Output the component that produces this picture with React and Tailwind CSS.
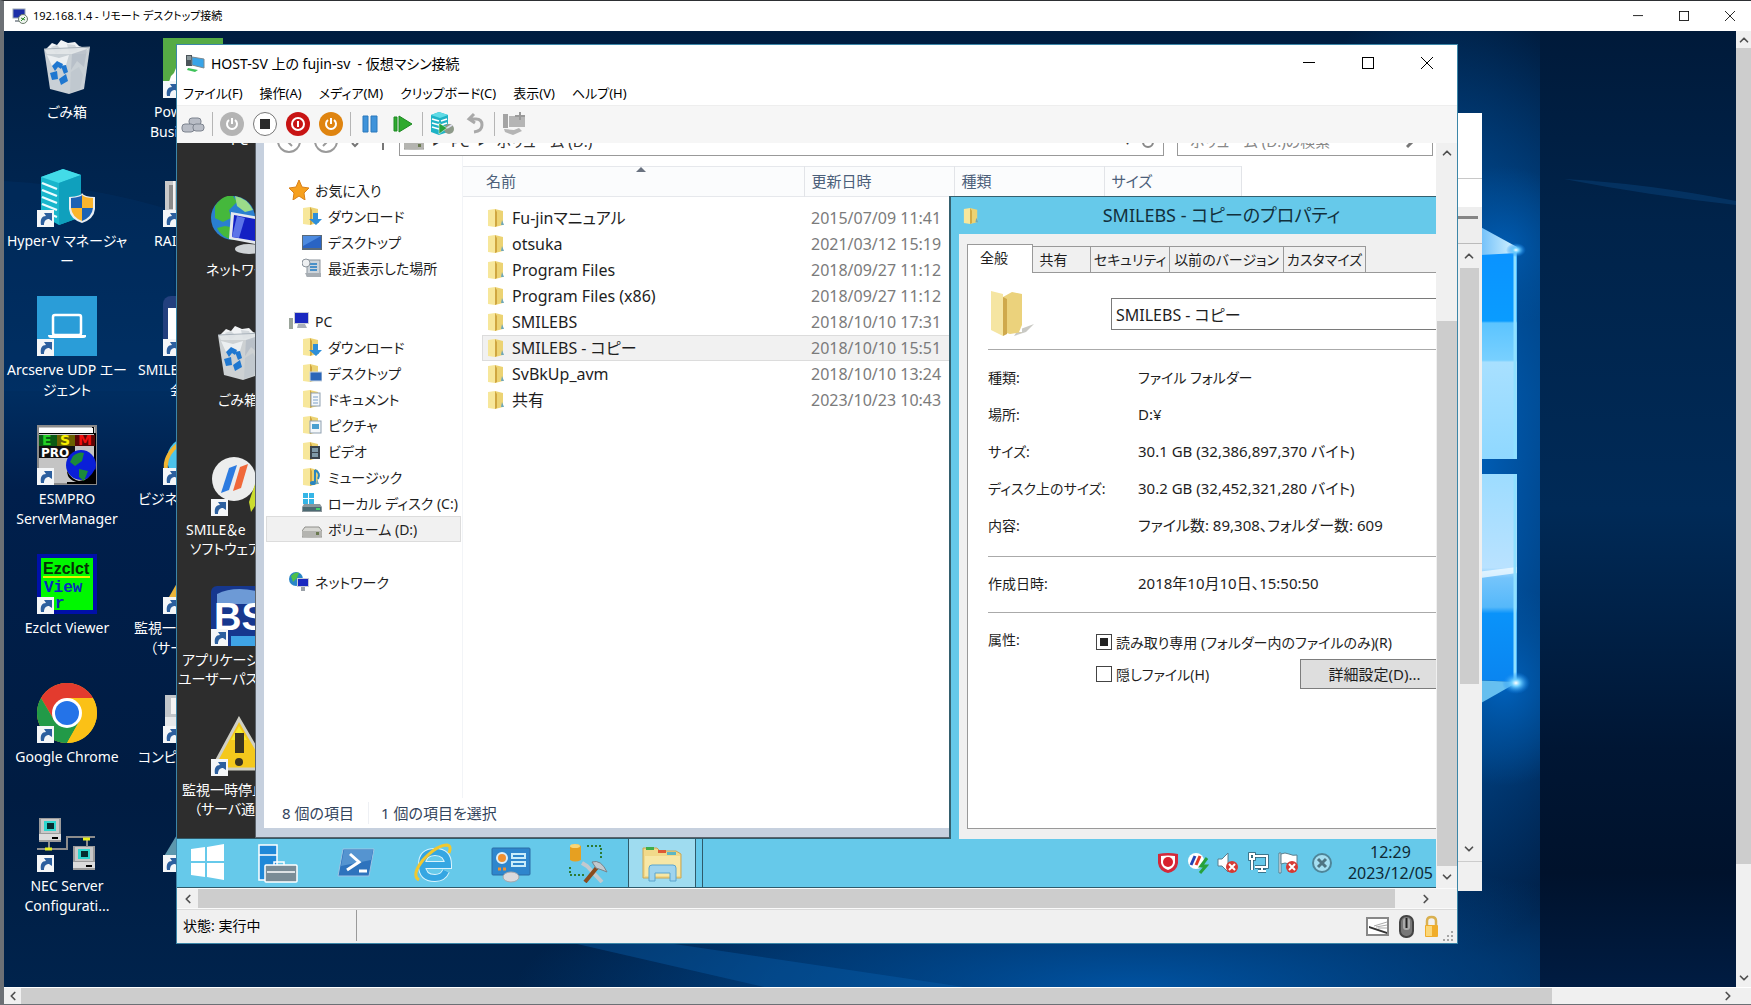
import React from "react";
import { ChevronUp, ChevronDown, ChevronLeft, ChevronRight } from "lucide-react";

/* ---------- small shared pieces ---------- */

const ScrollButton = ({ dir, className }) => {
  const icons = { up: ChevronUp, down: ChevronDown, left: ChevronLeft, right: ChevronRight };
  const Icon = icons[dir];
  return (
    <button aria-label={`scroll ${dir}`} className={`flex shrink-0 items-center justify-center bg-[#f0f0f0] text-[#505050] ${className}`}>
      <Icon size={14} strokeWidth={3} />
    </button>
  );
};

const WindowButtons = ({ className, size }) => (
  <div className={`flex items-center ${className}`}>
    <button aria-label="minimize">
      <svg width={size} height={size} viewBox="0 0 12 12"><path d="M0 5.5h12" stroke="#000" /></svg>
    </button>
    <button aria-label="maximize">
      <svg width={size} height={size} viewBox="0 0 12 12"><rect x=".5" y=".5" width="11" height="11" fill="none" stroke="#000" /></svg>
    </button>
    <button aria-label="close">
      <svg width={size} height={size} viewBox="0 0 12 12"><path d="M0 0l12 12M12 0L0 12" stroke="#000" /></svg>
    </button>
  </div>
);

const ShortcutArrow = () => (
  <g>
    <rect x="0" y="43" width="17" height="17" fill="#f4f6f8" />
    <path d="M4 58c-1-6 1-9 5-9l-2-3h8v8l-3-2c-3 0-5 2-5 6z" fill="#2c5f9e" />
  </g>
);

/* ---------- desktop icons (60 x 60) ---------- */

const Bin = () => (
  <g>
    <path d="M8 12l7-7 5 2 4-5 7 3 7-1 4 4 9 3-3 5H10z" fill="#f1f3f5" />
    <path d="M14 9l6-2 5 5-6 4zM30 6l8 1 3 6-9 2z" fill="#d3d8dc" />
    <path d="M7 11l46-2-6 42-15 5-19-5z" fill="#dfe3e6" opacity=".9" />
    <path d="M35 16l15-5-3 18-7-6-6 9z" fill="#b4bcc6" opacity=".8" />
    <path d="M34 34l8-5 4 8-3 14-10 4z" fill="#bcc4cc" opacity=".7" />
    <path d="M10 17l12 3 10-3-3 10-14 1z" fill="#eceff1" />
    <path d="M7 11l46-2" stroke="#a9b2ba" />
    <path d="M15 28l5-5 6 3-2 5-3-2-3 4zM13 35l7-2 1 8-6 1zM22 41l7-5 2 7-7 4zM24 28l5-1 2 7-4 2z" fill="#1f77d0" />
  </g>
);

const ServerTower = () => (
  <g>
    <path d="M4 10l22-8 18 6v42l-22 8L4 48z" fill="#19b6cc" />
    <path d="M4 10l22-8 18 6-22 8z" fill="#43dbe8" />
    <path d="M22 16l22-8v42l-22 8z" fill="#0fa0bd" />
    <path d="M5 16l15 6M5 23l15 6M5 30l15 6M5 37l15 6M5 44l15 6" stroke="#eafcff" strokeWidth="2.4" />
    <path d="M32 30q13-1 13-4 2 4 13 4v12q-1 10-13 14-12-4-13-14z" fill="#e9eef2" />
    <path d="M34 31q10-1 11-3v13H34z" fill="#1d62b4" />
    <path d="M45 28q3 3 11 3v10H45zM34 41h11v13q-10-4-11-13z" fill="#fbb52c" />
    <path d="M45 41h11q-1 9-11 13z" fill="#1d62b4" />
  </g>
);

const Laptop = () => (
  <g>
    <rect width="60" height="60" fill="#2a9dd8" />
    <rect x="16" y="19" width="28" height="20" rx="2" fill="none" stroke="#fff" strokeWidth="2.5" />
    <path d="M11 39h38v2q-1 1-3 1H14q-3 0-3-3z" fill="#fff" />
  </g>
);

const Esmpro = () => (
  <g>
    <rect width="60" height="60" fill="#8a8a8a" />
    <rect x="2" y="2" width="56" height="56" fill="#c4c4c4" />
    <path d="M2 8h54V2M58 8v50H30" stroke="#000" strokeWidth="2" fill="none" />
    <path d="M2 3h54v5H2z" fill="#fff" />
    <path d="M2 10h18v11H2z" fill="#0a5a14" />
    <path d="M20 10h18v11H20z" fill="#6a6000" />
    <path d="M38 10h20v11H38z" fill="#5a0606" />
    <path d="M2 21h36v12H2z" fill="#111" />
    <circle cx="44" cy="40" r="15" fill="#0a1fd8" />
    <path d="M30 46q0 10 14 12h14V44q-6 12-16 12-8-2-12-10z" fill="#000" />
    <path d="M36 31q6-5 11-3l-2 8-7 5-5-4zM42 44l9 2-4 10-5-4z" fill="#1c8a3a" />
    <g fontSize="14" fontWeight="900" fontFamily="DejaVu Sans">
      <text x="5" y="20" fill="#25d025">E</text>
      <text x="23" y="20" fill="#f8f000">S</text>
      <text x="41" y="20" fill="#f01010">M</text>
      <text x="4" y="32" fontSize="12" fill="#fff">PRO</text>
    </g>
  </g>
);

const Ezclct = () => (
  <g>
    <rect width="60" height="60" fill="#0010a8" />
    <rect x="4" y="4" width="52" height="52" fill="#00f800" />
    <text x="6" y="20" fontSize="16" fontWeight="700" fontFamily="Liberation Sans" fill="#063006">Ezclct</text>
    <path d="M6 23h47" stroke="#e8f000" strokeWidth="2" />
    <text x="7" y="38" fontSize="16" fontWeight="700" fontFamily="Liberation Mono" fill="#0828c0">View</text>
    <text x="18" y="54" fontSize="16" fontWeight="700" fontFamily="Liberation Mono" fill="#0828c0">r</text>
  </g>
);

const Chrome = () => (
  <g>
    <circle cx="30" cy="30" r="30" fill="#fbc116" />
    <path d="M4 15A30 30 0 0 1 56 15H30L17 37z" fill="#e33b2e" />
    <path d="M4 15A30 30 0 0 0 30 60L43 37 30 30 17 37z" fill="#229a48" />
    <path d="M30 15H56A30 30 0 0 1 30 60L43 37z" fill="#fbc116" />
    <circle cx="30" cy="30" r="15" fill="#fff" />
    <circle cx="30" cy="30" r="12" fill="#2473e8" />
  </g>
);

const NecServer = () => (
  <g>
    {[[2, 6], [36, 34]].map(([x, y]) => (
      <g key={x} transform={`translate(${x} ${y})`}>
        <rect width="22" height="24" fill="#9b9b9b" />
        <rect x="2" y="1" width="18" height="14" fill="#c8c8c8" />
        <rect x="5" y="3" width="12" height="10" fill="#2fd6cf" />
        <rect x="8" y="5" width="7" height="6" fill="#052c30" />
        <rect y="16" width="22" height="6" fill="#dcdcdc" />
        <path d="M13 20h6" stroke="#000" strokeWidth="2" />
      </g>
    ))}
    <path d="M0 37h30V25h28M12 30v7M50 25v10" stroke="#8c8c8c" strokeWidth="2" fill="none" />
    <path d="M8 37h7M46 27h7" stroke="#e6f020" strokeWidth="3" />
  </g>
);

const desktopIcons = [
  { art: <Bin />, lines: ["ごみ箱"], plain: true },
  { art: <ServerTower />, lines: ["Hyper-V マネージャ", "ー"] },
  { art: <Laptop />, lines: ["Arcserve UDP エー", "ジェント"] },
  { art: <Esmpro />, lines: ["ESMPRO", "ServerManager"] },
  { art: <Ezclct />, lines: ["Ezclct Viewer"] },
  { art: <Chrome />, lines: ["Google Chrome"] },
  { art: <NecServer />, lines: ["NEC Server", "Configurati..."] },
];

// second column, mostly hidden behind the VM window
const hiddenIcons = [
  {
    art: <g><rect width="60" height="60" fill="#56ab45" /><path d="M6 44l2-6 3-3 2-5h10v20H6z" fill="#fff" /></g>,
    lines: [["Pow", "pl-6"], ["Busi", "pl-5"]],
  },
  {
    art: <g><rect x="2" y="14" width="50" height="40" fill="#c9c9c9" /><rect x="6" y="18" width="4" height="24" fill="#8a8a8a" /><rect x="10" y="14" width="2" height="30" fill="#f4f4f4" /></g>,
    lines: [["RAI", "pl-6"]],
  },
  {
    art: <g><rect width="60" height="60" rx="8" fill="#23407e" /><rect x="5" y="12" width="20" height="32" fill="#fff" /></g>,
    lines: [["SMILE", "pl-2"], ["会", "pl-10"]],
  },
  {
    art: <g><circle cx="26" cy="34" r="22" fill="#4cc3ea" /><path d="M3 44q-2-14 14-26" stroke="#f2b632" strokeWidth="4" fill="none" /></g>,
    lines: [["ビジネ", "pl-2"]],
  },
  {
    art: <path d="M2 50L26 8l24 42z" fill="#e9b43a" />,
    lines: [["監視一", "pl-1"], ["（サー", "pl-5"]],
  },
  {
    art: <g><rect x="2" y="12" width="40" height="22" fill="#c2c6ca" /><rect x="8" y="15" width="30" height="16" fill="#f4f4f4" /><rect x="2" y="34" width="44" height="10" fill="#e6e8ea" /></g>,
    lines: [["コンピュ", "pl-2"]],
  },
  { art: <path d="M0 46L24 6v40z" fill="#5d97ad" />, lines: [] },
];

/* ---------- guest desktop ---------- */

const guestIcons = [
  {
    plain: true,
    art: (
      <g>
        <circle cx="22" cy="22" r="22" fill="#2a7fd0" />
        <path d="M4 10q8-12 18-10l4 6-8 8 2 8-8 4-8-4zM14 30l10 2-2 12q-12-3-16-12z" fill="#45b83c" />
        <path d="M24 0q12 2 18 14l-8 2-8-6z" fill="#9bdc8a" />
        <path d="M20 16l34 6v28l-36-7z" fill="#e4e8ee" />
        <path d="M23 19l32 6v22l-34-6z" fill="#1320c4" />
        <path d="M26 20l8 2-6 20-7-1z" fill="#5c74e8" />
        <ellipse cx="38" cy="53" rx="14" ry="5" fill="#cfd3d6" />
      </g>
    ),
    lines: [["ネットワーク", "pl-7"]],
  },
  { plain: true, art: <g transform="translate(0 -2)"><Bin /></g>, lines: [["ごみ箱", "pl-10"]] },
  {
    art: (
      <g>
        <circle cx="23" cy="23" r="22" fill="#eceded" />
        <path d="M18 12l8-3-8 25-8 3z" fill="#2d7be0" />
        <path d="M29 11l8-3-7 24-8 3z" fill="#f0683a" />
        <path d="M44 28l-6 18 2 10 8-12z" fill="#cbdc2e" />
      </g>
    ),
    lines: [["SMILE＆e", "pl-2"], ["ソフトウェア", "pl-3"]],
  },
  {
    art: (
      <g>
        <rect width="60" height="60" rx="6" fill="#16378e" />
        <path d="M6 8q20-10 50 0v10H6z" fill="#6d9ad6" />
        <path d="M20 50h40v10H20z" fill="#3fa4e6" />
        <text x="3" y="44" fontSize="38" fontWeight="900" fontFamily="Liberation Sans" fill="#fff">BS</text>
      </g>
    ),
    lines: [["アプリケーション", "pl-1"], ["ユーザーパス", "pl-0"]],
  },
  {
    art: (
      <g>
        <path d="M28 3L57 53H1z" fill="#f4c81c" stroke="#cfcfc4" strokeWidth="3" />
        <path d="M28 10l8 14h-16z" fill="#f6ea2c" />
        <path d="M24 17h9v20h-9z" fill="#3a3420" />
        <circle cx="28" cy="46" r="4" fill="#3a3420" />
      </g>
    ),
    lines: [["監視一時停止", "pl-1"], ["（サーバ通", "pl-4"]],
  },
];

const DesktopIcon = ({ art, plain }) => (
  <svg width="60" height="60" viewBox="0 0 60 60" className="shrink-0">
    {art}
    {!plain && <ShortcutArrow />}
  </svg>
);

/* ---------- explorer icons (20 x 20) ---------- */

const FolderBase = () => (
  <g>
    <path d="M1 2l7-1v18l-7-1z" fill="#f7e79b" />
    <path d="M8 1l8 2v14l-8 2z" fill="#ecd373" />
    <path d="M8 1l2 3v14l-2 1z" fill="#cfa640" />
    <path d="M15 12l2 5h-3z" fill="#6fa8b8" />
  </g>
);

const navArt = {
  star: <path d="M10 0l3 7 7 1-5 5 1 7-6-4-6 4 1-7-5-5 7-1z" fill="#f6a01e" stroke="#d8801a" />,
  download: <g><FolderBase /><path d="M11 7h5v6h4l-6 6-7-6h4z" fill="#2f8fd8" /></g>,
  screen: <g><rect x="0" y="3" width="20" height="15" fill="#5a6a78" /><rect x="1" y="4" width="18" height="12" fill="#2a64c4" /><path d="M1 4h18L1 14z" fill="#4d8be0" /></g>,
  recent: <g><rect x="5" y="2" width="13" height="16" fill="#cdd4da" stroke="#8c949c" /><path d="M8 6h7M8 9h7M8 12h7" stroke="#4a90c8" strokeWidth="2" /><circle cx="4" cy="5" r="4" fill="#eef0f2" stroke="#8c949c" /><path d="M3 15h16v4H5z" fill="#a7adb3" /></g>,
  pc: <g><rect x="0" y="7" width="4" height="11" fill="#9aa49a" /><rect x="5" y="1" width="15" height="12" fill="#c8ccd6" /><rect x="6" y="2" width="13" height="10" fill="#1a28c0" /><path d="M9 13h7l2 4H8z" fill="#aab0b8" /></g>,
  desktop: <g><FolderBase /><rect x="8" y="9" width="12" height="9" fill="#2c66b8" stroke="#c8d4e0" /></g>,
  doc: <g><FolderBase /><rect x="9" y="4" width="9" height="13" fill="#f4f7fa" stroke="#8fa0b0" /><path d="M11 8h5M11 11h5M11 14h5" stroke="#7aa0c8" /></g>,
  picture: <g><FolderBase /><rect x="8" y="6" width="11" height="12" fill="#f4f7fa" stroke="#8fa0b0" /><rect x="10" y="9" width="7" height="5" fill="#4a9fd0" /></g>,
  video: <g><FolderBase /><rect x="8" y="5" width="10" height="13" fill="#3a444c" /><rect x="10" y="7" width="6" height="4" fill="#7f9aa8" /><rect x="10" y="12" width="6" height="4" fill="#7f9aa8" /></g>,
  music: <g><FolderBase /><path d="M13 3v12M13 3q6 3 3 9" stroke="#2a86c0" strokeWidth="2" fill="none" /><ellipse cx="11" cy="16" rx="3" ry="2" fill="#2a86c0" /></g>,
  diskC: <g><path d="M1 0h5v5H1zM7 0h5v5H7zM1 6h5v5H1zM7 6h5v5H7z" fill="#35b5e6" /><path d="M2 11h16l2 3v5H0v-5z" fill="#8b979c" /><rect x="1" y="14" width="18" height="4" fill="#4c6a72" /><rect x="14" y="15" width="4" height="2" fill="#45d06a" /></g>,
  disk: <g><path d="M3 8h14l3 4v6H0v-6z" fill="#d6d6d2" stroke="#8e8e8a" /><path d="M0 12h20v5q-10 3-20 0z" fill="#b4b4b0" /><rect x="14" y="13" width="3" height="3" fill="#6a7a50" /></g>,
  network: <g><circle cx="7" cy="7" r="7" fill="#2a86c8" /><path d="M2 4q4-5 8-3l-2 5-4 4z" fill="#4ec04a" /><rect x="8" y="6" width="12" height="9" fill="#c8ccd6" /><rect x="9" y="7" width="10" height="7" fill="#1a28c0" /><path d="M12 15h4v4h-4z" fill="#9aa0a8" /></g>,
};

const NavIcon = ({ name }) => (
  <svg width="20" height="20" viewBox="0 0 20 20" className="shrink-0">{navArt[name]}</svg>
);

const navItems = [
  { icon: "star", label: "お気に入り", top: true },
  { icon: "download", label: "ダウンロード" },
  { icon: "screen", label: "デスクトップ" },
  { icon: "recent", label: "最近表示した場所" },
  { gap: true },
  { icon: "pc", label: "PC", top: true },
  { icon: "download", label: "ダウンロード" },
  { icon: "desktop", label: "デスクトップ" },
  { icon: "doc", label: "ドキュメント" },
  { icon: "picture", label: "ピクチャ" },
  { icon: "video", label: "ビデオ" },
  { icon: "music", label: "ミュージック" },
  { icon: "diskC", label: "ローカル ディスク (C:)" },
  { icon: "disk", label: "ボリューム (D:)", active: true },
  { gap: true },
  { icon: "network", label: "ネットワーク", top: true },
];

const files = [
  ["Fu-jinマニュアル", "2015/07/09 11:41"],
  ["otsuka", "2021/03/12 15:19"],
  ["Program Files", "2018/09/27 11:12"],
  ["Program Files (x86)", "2018/09/27 11:12"],
  ["SMILEBS", "2018/10/10 17:31"],
  ["SMILEBS - コピー", "2018/10/10 15:51"],
  ["SvBkUp_avm", "2018/10/10 13:24"],
  ["共有", "2023/10/23 10:43"],
];

const Explorer = () => (
  <div className="flex min-w-0 flex-1 flex-col overflow-hidden border-b border-l border-[#5d646c]">
    <div className="flex min-h-0 flex-1 flex-col border-b-9 border-l-8 border-[#c6d0de] bg-white">
      {/* address row, scrolled half out of view */}
      <div className="-mt-[17px] flex h-[30px] shrink-0 text-[15px] text-[#333]">
        <div className="flex w-[135px] items-center pl-3">
          <svg width="120" height="26" viewBox="0 0 120 26" fill="none" stroke="#9a9a9a" strokeWidth="2">
            <circle cx="13" cy="13" r="11" /><path d="M16 8l-5 5 5 5" />
            <circle cx="50" cy="13" r="11" /><path d="M47 8l5 5-5 5" />
            <path d="M76 15l3 3 3-3M107 5v17" stroke="#777" />
          </svg>
        </div>
        <div className="flex flex-1 items-center gap-2 border border-[#999] pl-1 pr-2">
          <svg width="20" height="20" viewBox="0 0 20 20">{navArt.disk}</svg>
          <span className="text-[11px]">▶</span><span>PC</span>
          <span className="text-[11px]">▶</span><span className="flex-1">ボリューム (D:)</span>
          <span className="text-[11px]">▼</span>
          <svg width="14" height="18" viewBox="0 0 14 18"><circle cx="7" cy="10" r="5" fill="none" stroke="#888" strokeWidth="2" /></svg>
        </div>
        <div className="ml-[13px] mr-[3px] flex w-[256px] items-center border border-[#999] px-3">
          <input aria-label="search" placeholder="ボリューム (D:)の検索" className="min-w-0 flex-1 placeholder:text-[#888]" />
          <svg width="14" height="18" viewBox="0 0 14 18"><path d="M1 15l6-6" stroke="#777" strokeWidth="3" /><circle cx="9" cy="6" r="4" fill="none" stroke="#888" /></svg>
        </div>
      </div>

      <div className="flex min-h-0 flex-1">
        <nav className="flex w-[199px] shrink-0 flex-col border-r border-[#f2f4f7] pt-[21px] text-[14px] text-[#1e1e1e]">
          {navItems.map((item, i) =>
            item.gap ? (
              <div key={i} className="h-[27px] shrink-0" />
            ) : (
              <a
                key={i}
                href="#"
                className={`mr-px ml-0.5 flex h-[26px] shrink-0 items-center gap-1.5 border ${item.top ? "pl-[22px]" : "pl-[35px]"} ${
                  item.active ? "border-[#dcdcdc] bg-[#f1f1f1]" : "border-transparent"
                }`}
              >
                <NavIcon name={item.icon} />
                {item.label}
              </a>
            )
          )}
        </nav>

        <div className="min-w-0 flex-1 pt-[10px]">
          <table className="w-[779px] table-fixed text-left">
            <thead>
              <tr className="h-[30px] border-y border-[#e6e8ec] bg-[#fbfcfd] text-[15px] text-[#4c607a]">
                <th className="relative w-[341px] border-r border-[#e2e4e8] pl-[23px] font-normal">
                  名前
                  <span className="absolute left-[173px] top-0 border-x-5 border-b-5 border-x-transparent border-b-[#6a7280]" />
                </th>
                <th className="w-[150px] border-r border-[#e2e4e8] pl-[7px] font-normal">更新日時</th>
                <th className="w-[150px] border-r border-[#e2e4e8] pl-[7px] font-normal">種類</th>
                <th className="border-r border-[#e2e4e8] pl-[7px] font-normal">サイズ</th>
              </tr>
              <tr className="h-2" />
            </thead>
            <tbody className="text-[16px]">
              {files.map(([name, date], i) => (
                <tr key={name} className="h-[26px] text-[#1e1e1e]">
                  <td className="p-0 pl-[19px]">
                    <div className={`flex h-[26px] items-center gap-[5px] border-y border-l pl-1 ${i === 5 ? "border-[#dcdcdc] bg-[#f1f1f1]" : "border-transparent"}`}>
                      <svg width="20" height="20" viewBox="0 0 20 20" className="shrink-0"><FolderBase /></svg>
                      {name}
                    </div>
                  </td>
                  <td className="p-0">
                    <div className={`flex h-[26px] items-center border-y pl-[7px] text-[#7b7b7b] ${i === 5 ? "border-[#dcdcdc] bg-[#f1f1f1]" : "border-transparent"}`}>
                      {date}
                    </div>
                  </td>
                  <td />
                  <td />
                </tr>
              ))}
            </tbody>
          </table>
        </div>
      </div>

      <div className="flex h-[30px] shrink-0 items-center pl-[18px] text-[15px] text-[#33445c]">
        <span className="w-[87px] border-r border-[#eef0f4]">8 個の項目</span>
        <span className="pl-3">1 個の項目を選択</span>
      </div>
    </div>
  </div>
);

/* ---------- properties dialog ---------- */

const Row = ({ label, children }) => (
  <div className="flex h-[37px] items-center">
    <dt className="w-[150px] text-[14px]">{label}</dt>
    <dd>{children}</dd>
  </div>
);

const Properties = () => (
  <section className="absolute bottom-[49px] left-[772px] right-0 top-[53px] flex flex-col overflow-hidden border-l-2 border-t border-[#35606f] bg-[#f0f0f0] text-[15px] text-[#1e1e1e]">
    <div className="flex h-[37px] shrink-0 items-center bg-[#66c9ea] pl-3">
      <svg width="16" height="20" viewBox="0 0 18 20"><FolderBase /></svg>
      <h2 className="flex-1 pl-7 text-center text-[18px] text-[#12303c]">SMILEBS - コピーのプロパティ</h2>
    </div>
    <div className="flex min-h-0 flex-1 flex-col border-l-8 border-[#66c9ea] pb-[10px] pl-2 pt-[10px]">
      <div className="flex h-[28px] shrink-0 items-end text-[14px]">
        <button className="relative z-10 -mb-px h-[29px] w-[66px] border border-b-0 border-[#999] bg-white pb-1 pr-3">全般</button>
        <button className="h-[26px] w-[58px] border-r border-t border-[#999] pr-4">共有</button>
        <button className="h-[26px] w-[79px] border-r border-t border-[#999]">セキュリティ</button>
        <button className="h-[26px] w-[114px] border-r border-t border-[#999]">以前のバージョン</button>
        <button className="h-[26px] w-[82px] border-r border-t border-[#999]">カスタマイズ</button>
      </div>
      <div className="flex min-h-0 flex-1 flex-col border-y border-l border-[#999] bg-white pl-5">
        <div className="flex h-[76px] shrink-0 items-center pt-1.5">
          <svg width="50" height="48" viewBox="0 0 50 48">
            <path d="M30 40l16-6-8 8-12 4z" fill="#c9c9c4" />
            <path d="M3 1l12 3v42L3 40z" fill="#f5e5a2" />
            <path d="M15 7l9-5 10 2v38l-12 2-7-2z" fill="#ebd27c" />
            <path d="M15 7l4 2v35l-4 2z" fill="#cfa94c" />
            <path d="M34 35v7l-3 0z" fill="#fff" />
          </svg>
          <input
            aria-label="フォルダー名"
            defaultValue="SMILEBS - コピー"
            className="ml-[73px] h-[32px] flex-1 border border-r-0 border-[#7a7a7a] bg-white px-1 text-[16px]"
          />
        </div>
        <dl className="border-t border-[#aaa] pt-[9px]">
          <Row label="種類:"><span className="text-[14px]">ファイル フォルダー</span></Row>
          <Row label="場所:">D:¥</Row>
          <Row label="サイズ:">30.1 GB (32,386,897,370 バイト)</Row>
          <Row label="ディスク上のサイズ:">30.2 GB (32,452,321,280 バイト)</Row>
          <Row label="内容:">ファイル数: 89,308、フォルダー数: 609</Row>
        </dl>
        <dl className="mt-[12px] border-y border-[#aaa] pb-[10px] pt-[8px]">
          <Row label="作成日時:">2018年10月10日、15:50:50</Row>
        </dl>
        <div className="flex pt-[14px] text-[14px]">
          <span className="w-[108px] pt-0.5">属性:</span>
          <div className="flex-1">
            <label className="flex h-[30px] items-center gap-1">
              <input type="checkbox" defaultChecked className="size-4 shrink-0 appearance-none border border-[#444] bg-[length:8px_8px] bg-center bg-no-repeat checked:bg-[linear-gradient(#222,#222)]" />
              読み取り専用 (フォルダー内のファイルのみ)(R)
            </label>
            <div className="flex items-center justify-between">
              <label className="flex h-[34px] items-center gap-1">
                <input type="checkbox" className="size-4 shrink-0 appearance-none border border-[#444]" />
                隠しファイル(H)
              </label>
              <button className="h-[30px] w-[136px] border border-r-0 border-[#7d7d7d] bg-[#dedede] pl-3 text-[15px]">詳細設定(D)...</button>
            </div>
          </div>
        </div>
      </div>
    </div>
  </section>
);

/* ---------- guest taskbar ---------- */

const taskIcons = [
  {
    label: "start", w: "w-[61px]",
    art: <path d="M3 6l14-2v14H3zM19 4l17-3v17H19zM3 20h14v14L3 32zM19 20h17v17l-17-3z" fill="#fff" />,
  },
  {
    label: "server manager", w: "w-[79px]",
    art: (
      <g stroke="#fff" strokeWidth="1.5">
        <path d="M1 2h18v35H1z" fill="#1f88d8" /><path d="M1 12h18" />
        <path d="M16 22v-3h10v3" fill="none" /><rect x="7" y="22" width="32" height="17" rx="1" fill="#7a8c96" /><path d="M9 29h28" />
      </g>
    ),
  },
  {
    label: "powershell", w: "w-[77px]",
    art: (
      <g>
        <path d="M7 6h31l-5 27H2z" fill="#2e73bd" stroke="#9cc4e4" />
        <path d="M8 7h29l-2 10-30 6z" fill="#5594d0" />
        <path d="M14 11l9 8-12 8M23 28h8" stroke="#fff" strokeWidth="3" fill="none" />
      </g>
    ),
  },
  {
    label: "internet explorer", w: "w-[78px]",
    art: (
      <g fill="none">
        <path d="M10 22h25q0-13-13-13T9 22t13 13q8 0 11-7" stroke="#d9f3fc" strokeWidth="8" />
        <path d="M10 22h25q0-13-13-13T9 22t13 13q8 0 11-7" stroke="#35a6e2" strokeWidth="6" />
        <path d="M6 37Q-2 32 10 17 24 2 34 2q5 1 2 8" stroke="#f1c82f" strokeWidth="3" />
      </g>
    ),
  },
  {
    label: "control panel", w: "w-[77px]",
    art: (
      <g>
        <rect x="1" y="5" width="38" height="27" rx="1" fill="#2e86cd" stroke="#2b6da6" />
        <circle cx="11" cy="15" r="5" fill="#f09030" stroke="#dceffa" strokeWidth="2" />
        <path d="M21 11h13v4H21zM21 19h13v4H21z" fill="none" stroke="#c9ecfa" strokeWidth="2" />
        <path d="M7 26h3M12 26h3" stroke="#f09030" strokeWidth="3" />
        <ellipse cx="20" cy="34" rx="8" ry="5" fill="#dcd9dc" stroke="#a7a6aa" />
      </g>
    ),
  },
  {
    label: "setup tool", w: "w-[79px]",
    art: (
      <g>
        <path d="M1 3q6-4 11 0v14q-6 3-11 0z" fill="#e6a021" /><ellipse cx="6" cy="3" rx="5" ry="2" fill="#f9d678" />
        <path d="M18 3h14v12M1 24v8h14" stroke="#2c7a34" strokeWidth="2" strokeDasharray="2 2" fill="none" />
        <path d="M13 20l5 3 15 16" stroke="#c3c9ce" strokeWidth="4" fill="none" />
        <path d="M16 39l14-17" stroke="#8a4b1e" strokeWidth="4" /><path d="M23 19q9-3 15 10l-5-2-6-2z" fill="#c3c9ce" stroke="#7b8288" />
      </g>
    ),
  },
];

const Taskbar = () => (
  <footer className="flex h-[50px] shrink-0 items-center border-y border-[#2f5a6a] bg-[#66c9ea]">
    {taskIcons.map((t) => (
      <button key={t.label} aria-label={t.label} className={`flex justify-center ${t.w}`}>
        <svg width="40" height="40" viewBox="0 0 40 40">{t.art}</svg>
      </button>
    ))}
    <div className="flex h-full border-r border-[#2f5a6a]">
      <button aria-label="explorer" className="flex h-full w-[68px] items-center justify-center border-x border-[#2f5a6a] bg-[#9fdcf0]">
        <svg width="40" height="40" viewBox="0 0 40 40">
          <path d="M1 5h14l3 3h16l5 3v24H1z" fill="#f1d98a" stroke="#c9a654" />
          <path d="M4 4h8v3H4z" fill="#3fae4a" /><path d="M16 7h8v3h-8z" fill="#de5a35" /><path d="M25 9h9v3h-9z" fill="#5cb7c4" />
          <path d="M3 13h35v20H3z" fill="#f7e7a6" />
          <path d="M7 38V25q0-3 3-3h21q3 0 3 3v13h-6v-8H13v8z" fill="#9fd4ee" stroke="#5aa5cf" />
        </svg>
      </button>
      <span className="w-1.5" />
    </div>
    <div className="ml-auto flex items-center gap-2">
      <svg width="22" height="22" viewBox="0 0 22 22"><path d="M1 2q10-2 20 0v9q-1 8-10 10Q2 19 1 11z" fill="#d4293a" /><path d="M4 4q7-1 14 0v7q-1 5-7 7-6-2-7-7z" fill="#fff" /><circle cx="11" cy="10" r="5" fill="#d8202c" /></svg>
      <svg width="22" height="22" viewBox="0 0 22 22"><circle cx="9" cy="9" r="8" fill="#fff" /><path d="M8 4l-4 9" stroke="#2344b4" strokeWidth="3" /><path d="M13 4l-4 9" stroke="#e03a28" strokeWidth="3" /><path d="M20 6l-6 8h5l-6 7" stroke="#27a23c" strokeWidth="3" fill="none" /></svg>
      <svg width="22" height="22" viewBox="0 0 22 22"><path d="M1 7h4l6-6v19l-6-6H1z" fill="#fff" stroke="#5b7f8e" /><circle cx="15" cy="15" r="6" fill="#d63a34" /><path d="M12 12l6 6M18 12l-6 6" stroke="#fff" strokeWidth="2" /></svg>
      <svg width="22" height="22" viewBox="0 0 22 22"><g fill="none" stroke="#2f5a6c" strokeWidth="3.5"><path d="M8 4h12v11H8M3 2h4v5H3zM5 7v11M11 19h8M15 15v4" /></g><g fill="none" stroke="#fff" strokeWidth="2"><path d="M8 4h12v11H8M3 2h4v5H3zM5 7v11M11 19h8M15 15v4" /></g></svg>
      <svg width="22" height="22" viewBox="0 0 22 22"><path d="M2 1h2v20H2z" fill="#fff" stroke="#5b7f8e" /><path d="M4 2q4-2 8 0t8 1v10q-4 1-8-1t-8 0z" fill="#fff" stroke="#5b7f8e" /><circle cx="15" cy="15" r="6" fill="#d63a34" /><path d="M12 12l6 6M18 12l-6 6" stroke="#fff" strokeWidth="2" /></svg>
      <svg width="22" height="22" viewBox="0 0 22 22" className="ml-1"><circle cx="11" cy="11" r="9" fill="#a5dff2" stroke="#4f8598" strokeWidth="2" /><path d="M7 7l8 8M15 7l-8 8" stroke="#4f7482" strokeWidth="3" /></svg>
    </div>
    <div className="ml-[15px] mr-[3px] text-center text-[16px] leading-[21px] text-[#0f2a36]">
      <p>12:29</p>
      <p>2023/12/05</p>
    </div>
  </footer>
);

/* ---------- VM connection window ---------- */

const menus = ["ファイル(F)", "操作(A)", "メディア(M)", "クリップボード(C)", "表示(V)", "ヘルプ(H)"];

const PowerGlyph = () => <path d="M9 8a5 5 0 1 0 6 0M12 6v6" stroke="#fff" strokeWidth="2" fill="none" />;

const tools = [
  { name: "ctrl-alt-del", art: <g fill="#b9bdc6" stroke="#7d838e"><rect x="8" y="6" width="12" height="7" rx="3" /><rect x="1" y="12" width="12" height="8" rx="3" /><rect x="12" y="12" width="11" height="7" rx="3" /></g> },
  null,
  { name: "start", art: <g><circle cx="12" cy="12" r="12" fill="#b4b4b4" /><PowerGlyph /></g> },
  { name: "turn off", art: <g><circle cx="12" cy="12" r="11.5" fill="#fff" stroke="#777" /><rect x="7" y="7" width="10" height="10" fill="#2b2b2b" /></g> },
  { name: "shut down", art: <g><circle cx="12" cy="12" r="12" fill="#c81414" /><circle cx="12" cy="12" r="6" fill="none" stroke="#fff" strokeWidth="2" /><path d="M12 9v6" stroke="#fff" strokeWidth="2" /></g> },
  { name: "save", art: <g><circle cx="12" cy="12" r="12" fill="#df8410" /><PowerGlyph /></g> },
  null,
  { name: "pause", art: <path d="M5 4h5v16H5zM13 4h6v16h-6z" fill="#3f93da" stroke="#2a78bd" /> },
  { name: "reset", art: <g fill="#2faa2f" stroke="#1d8a22"><path d="M3 5h3v14H3z" /><path d="M8 4l13 8-13 8z" /></g> },
  null,
  { name: "checkpoint", art: <g><path d="M1 3l8-3 9 3v17l-9 3-8-3z" fill="#1fb3c6" /><path d="M1 3l8-3 9 3-8 3z" fill="#5fdbe6" /><path d="M2 7l7 2M2 11l7 2M2 15l7 2M11 9l6-2M11 13l6-2" stroke="#fff" strokeWidth="1.5" /><circle cx="19" cy="17" r="5" fill="#8e9a8a" /><path d="M17 16l5-3" stroke="#dde" strokeWidth="2" /><path d="M9 11l8 5-8 6z" fill="#27a23c" stroke="#fff" strokeWidth=".5" /></g> },
  { name: "revert", art: <path d="M11 2L6 7l6 4M7 7h6q6 0 6 6t-8 7" stroke="#a9a9a9" strokeWidth="3" fill="none" /> },
  null,
  { name: "enhanced session", art: <g fill="#b5b5b5"><path d="M1 2h5v14H1z" fill="#a4a4a4" /><path d="M7 4h16v11H7z" /><path d="M2 17l10 1 5-2 3 3-9 4-8-3z" /><path d="M17 0h2v8h-2zM13 3h10v2H13z" fill="#9a9a9a" /></g> },
];

const VmWindow = () => (
  <main className="absolute bottom-[43px] left-[172px] right-[278px] top-[13px] flex flex-col border border-[#3c86a8] bg-white">
    <header className="flex h-[36px] shrink-0 items-center pl-2 text-[14px] text-black">
      <svg width="20" height="20" viewBox="0 0 20 20" className="mr-1.5">
        <path d="M1 2h6v11H1z" fill="#4b545a" /><path d="M2 4h4M2 6h4" stroke="#cdd" />
        <path d="M7 4l12 2v9L7 12z" fill="#38a4e8" stroke="#7a8890" /><path d="M3 15l10 2-3 2-8-2z" fill="#3fc25a" />
      </svg>
      <h1 className="whitespace-pre">HOST-SV 上の fujin-sv  - 仮想マシン接続</h1>
      <WindowButtons size={12} className="ml-auto mr-6 gap-[47px]" />
    </header>
    <div className="flex h-[24px] shrink-0 items-center gap-[17px] pl-1.5 pt-0.5 text-[13px] text-black">
      {menus.map((m) => <button key={m}>{m}</button>)}
    </div>
    <div className="flex h-[38px] shrink-0 items-center gap-[9px] border-t border-[#eee] bg-[#f6f6f6] pb-px pl-1">
      {tools.map((t, i) =>
        t ? (
          <button key={i} aria-label={t.name}>
            <svg width="24" height="24" viewBox="0 0 24 24">{t.art}</svg>
          </button>
        ) : (
          <span key={i} className="-mx-0.5 h-6 w-px bg-[#b5b5b5]" />
        )
      )}
    </div>

    <div className="flex min-h-0 flex-1">
      <div className="relative flex min-w-0 flex-1 flex-col overflow-hidden bg-[#2d2d2d]">
        <div className="flex min-h-0 flex-1">
          <div className="w-[78px] shrink-0 overflow-hidden pl-px text-[14px] leading-[19px] text-white">
            <p className="-mt-[13px] mb-[47px] pl-[53px]">PC</p>
            <div className="w-[124px]">
              {guestIcons.map((icon, i) => (
                <div key={i} className="h-[130px]">
                  <div className="pl-[33px]"><DesktopIcon {...icon} /></div>
                  <div className="pt-1">
                    {icon.lines.map(([text, pad]) => <p key={text} className={pad}>{text}</p>)}
                  </div>
                </div>
              ))}
            </div>
          </div>
          <Explorer />
        </div>
        <Taskbar />
        <Properties />
      </div>
      <div className="flex w-[21px] shrink-0 flex-col bg-[#f0f0f0] pl-px">
        <ScrollButton dir="up" className="h-[20px]" />
        <div className="h-[158px] shrink-0" />
        <div className="flex-1 bg-[#cdcdcd]" />
        <ScrollButton dir="down" className="h-[22px]" />
      </div>
    </div>
    <div className="flex h-[21px] shrink-0 border-y border-[#fafafa] bg-[#f0f0f0]">
      <ScrollButton dir="left" className="w-[21px]" />
      <div className="flex-1 bg-[#cdcdcd]" />
      <div className="w-5" />
      <ScrollButton dir="right" className="mr-5 w-[22px]" />
    </div>
    <div className="flex h-[34px] shrink-0 items-start border-t border-[#dadada] bg-[#f0f0f0] pl-1.5 text-[14px] text-black">
      <span className="flex h-[31px] w-[174px] items-center border-r border-[#9a9a9a]">状態: 実行中</span>
      <div className="ml-auto flex h-[33px] items-center gap-2.5">
        <svg width="23" height="19" viewBox="0 0 23 19"><rect x="1" y="1" width="21" height="17" fill="#fff" stroke="#888" strokeWidth="2" /><path d="M3 9l18 6v2L3 11z" fill="#333" /><path d="M8 9l13-4M10 10l11-2M12 11h9" stroke="#aaa" /></svg>
        <svg width="15" height="23" viewBox="0 0 15 23"><rect x="1" y="1" width="13" height="21" rx="6" fill="#777" stroke="#444" strokeWidth="2" /><rect x="4" y="3" width="7" height="12" rx="3" fill="#aaa" /><path d="M7.5 3v10" stroke="#222" strokeWidth="2" /></svg>
        <svg width="15" height="23" viewBox="0 0 15 23"><path d="M3 12V6q0-4 4.5-4T12 6v6" fill="none" stroke="#d9b050" strokeWidth="2.5" /><rect x="1" y="10" width="13" height="12" rx="1" fill="#f0ad2a" /><path d="M2 11h6v10H2z" fill="#fbd779" /></svg>
      </div>
      <svg width="12" height="12" viewBox="0 0 12 12" className="ml-1 mr-0.5 self-end" fill="#a5a5a5"><path d="M8 0h2v2H8zM4 4h2v2H4zM8 4h2v2H8zM0 8h2v2H0zM4 8h2v2H4zM8 8h2v2H8z" /></svg>
    </div>
  </main>
);

/* ---------- window peeking out behind the VM window ---------- */

const BackWindow = () => (
  <div className="absolute bottom-[96px] right-[254px] top-[82px] flex w-[60px] flex-col bg-white">
    <div className="h-[66px] shrink-0 border-b border-[#c8c8c8]" />
    <div className="h-[28px] shrink-0" />
    <div className="h-[37px] shrink-0 border-b border-[#bbb] bg-[#eee] pr-1 pt-[9px]">
      <div className="h-[3px] bg-[#858585]" />
    </div>
    <div className="flex flex-1 flex-col items-end bg-[#f0f0f0] pr-[3px]">
      <ScrollButton dir="up" className="h-[24px] w-[20px]" />
      <div className="h-[416px] w-[19px] bg-[#cdcdcd]" />
      <div className="flex-1" />
      <ScrollButton dir="down" className="h-[24px] w-[20px]" />
    </div>
    <div className="h-[30px] shrink-0 border-t border-[#ccc] bg-[#f0f0f0]" />
  </div>
);

const Wallpaper = () => (
  <svg className="absolute inset-0 size-full" viewBox="0 0 1732 956" preserveAspectRatio="none">
    <defs>
      <linearGradient id="base" x1="0" y1="0" x2="0" y2="1">
        <stop offset="0" stopColor="#001d40" /><stop offset=".15" stopColor="#00244e" />
        <stop offset=".38" stopColor="#002d60" /><stop offset=".48" stopColor="#001f4c" />
        <stop offset=".8" stopColor="#001c42" /><stop offset="1" stopColor="#00234c" />
      </linearGradient>
      <linearGradient id="dark" x1="0" y1="0" x2="0" y2="1">
        <stop offset="0" stopColor="#001a3a" /><stop offset=".2" stopColor="#00234a" />
        <stop offset=".5" stopColor="#002a57" /><stop offset=".75" stopColor="#001634" />
        <stop offset=".88" stopColor="#00122c" /><stop offset="1" stopColor="#001c42" />
      </linearGradient>
      <radialGradient id="glow"><stop offset="0" stopColor="#0068c8" /><stop offset=".6" stopColor="#0057a8" stopOpacity=".6" /><stop offset="1" stopColor="#0057a8" stopOpacity="0" /></radialGradient>
      <radialGradient id="spark"><stop offset="0" stopColor="#fff" /><stop offset=".3" stopColor="#6fd0ff" /><stop offset="1" stopColor="#0a80f0" stopOpacity="0" /></radialGradient>
      <linearGradient id="ray" x1="0" y1="0" x2="1" y2="0"><stop offset="0" stopColor="#0a8cf4" /><stop offset="1" stopColor="#d8f4ff" /></linearGradient>
      <linearGradient id="pane" x1="0" y1="0" x2="0" y2="1">
        <stop offset="0" stopColor="#0a93ff" /><stop offset=".33" stopColor="#0a9cff" /><stop offset=".34" stopColor="#5cc4ff" />
        <stop offset=".52" stopColor="#78d0ff" /><stop offset=".53" stopColor="#a8e0ff" /><stop offset="1" stopColor="#8fd8ff" />
      </linearGradient>
      <linearGradient id="pane2" x1="0" y1="0" x2="0" y2="1">
        <stop offset="0" stopColor="#9ddcff" /><stop offset=".45" stopColor="#b9e2ff" /><stop offset=".5" stopColor="#74c4fb" />
        <stop offset=".64" stopColor="#55b8fa" /><stop offset=".67" stopColor="#0a93fa" /><stop offset="1" stopColor="#0a85f0" />
      </linearGradient>
    </defs>
    <rect width="1732" height="956" fill="url(#base)" />
    <path d="M0 150q90 5 170 30v180H0z" fill="#00356e" opacity=".3" />
    <ellipse cx="1440" cy="440" rx="230" ry="480" fill="url(#glow)" />
    <ellipse cx="1500" cy="655" rx="90" ry="100" fill="url(#glow)" opacity=".8" />
    <ellipse cx="1500" cy="215" rx="80" ry="80" fill="url(#glow)" opacity=".6" />
    <ellipse cx="1130" cy="960" rx="620" ry="140" fill="url(#glow)" opacity=".7" />
    <path d="M560 910l90 0 310 46H760z" fill="#0864b4" opacity=".35" />
    <rect x="1536" width="196" height="956" fill="url(#dark)" />
    <path d="M1560 148q80 4 172 22v4q-90-10-172-26z" fill="#0a4a86" opacity=".4" />
    <path d="M1440 176l73 40v8l-73 2z" fill="url(#ray)" />
    <path d="M1440 226l73-4v206h-73z" fill="url(#pane)" />
    <path d="M1440 443h73v208l-73-4z" fill="url(#pane2)" />
    <path d="M1440 545l73-9v6l-73 10z" fill="#eef9ff" opacity=".8" />
    <path d="M1511 218v210M1511 443v208" stroke="#8fe0ff" strokeWidth="3" />
    <path d="M1440 648l74 3-74 42z" fill="#7fd8ff" opacity=".8" />
    <ellipse cx="1512" cy="219" rx="10" ry="7" fill="url(#spark)" />
    <ellipse cx="1512" cy="652" rx="14" ry="11" fill="url(#spark)" />
  </svg>
);

export default function App() {
  return (
    <div className="flex h-screen flex-col overflow-hidden border-b border-l-4 border-t border-[#6c7075] border-t-[#2d2f33] bg-white font-['Noto_Sans','Noto_Sans_CJK_JP',sans-serif] whitespace-nowrap [font-feature-settings:'palt']">
      <header className="flex h-[30px] shrink-0 items-center pl-2 text-[11px] text-black">
        <svg width="16" height="16" viewBox="0 0 16 16" className="mr-[5px]">
          <rect x="1" y="1" width="12" height="9" fill="#1c2fa8" stroke="#9aa6b4" /><path d="M3 12h7v2H3z" fill="#9aa0a8" />
          <circle cx="11" cy="11" r="4.5" fill="#eef4ee" stroke="#6a7a6a" /><path d="M9 10l2 1-2 2M13 9l-2 2 2 1" stroke="#2b8a2b" fill="none" />
        </svg>
        <span>192.168.1.4 - リモート デスクトップ接続</span>
        <WindowButtons size={10} className="ml-auto mr-4 gap-9" />
      </header>
      <div className="flex min-h-0 flex-1">
        <div className="relative min-w-0 flex-1 overflow-hidden">
          <Wallpaper />
          <div className="relative flex pt-[7px] text-[14px] leading-5 text-white">
            <div className="w-[126px]">
              {desktopIcons.map((icon) => (
                <div key={icon.lines[0]} className="flex h-[129px] flex-col items-center gap-1">
                  <DesktopIcon {...icon} />
                  <div className="text-center">
                    {icon.lines.map((line) => <p key={line}>{line}</p>)}
                  </div>
                </div>
              ))}
            </div>
            <div className="w-[126px]">
              {hiddenIcons.map((icon, i) => (
                <div key={i} className="flex h-[129px] flex-col gap-1">
                  <div className="flex justify-center"><DesktopIcon {...icon} /></div>
                  <div>
                    {icon.lines.map(([text, pad]) => <p key={text} className={pad}>{text}</p>)}
                  </div>
                </div>
              ))}
            </div>
          </div>
          <BackWindow />
          <VmWindow />
        </div>
        <div className="flex w-[15px] shrink-0 flex-col bg-[#f0f0f0]">
          <ScrollButton dir="up" className="h-[17px]" />
          <div className="flex-1 bg-[#cdcdcd]" />
          <div className="h-[105px]" />
          <ScrollButton dir="down" className="h-[18px]" />
        </div>
      </div>
      <div className="flex h-[17px] shrink-0 border-t border-white bg-[#f0f0f0]">
        <ScrollButton dir="left" className="w-[17px]" />
        <div className="flex-1 bg-[#cdcdcd]" />
        <div className="w-[167px]" />
        <ScrollButton dir="right" className="mr-[15px] w-[17px]" />
      </div>
    </div>
  );
}
